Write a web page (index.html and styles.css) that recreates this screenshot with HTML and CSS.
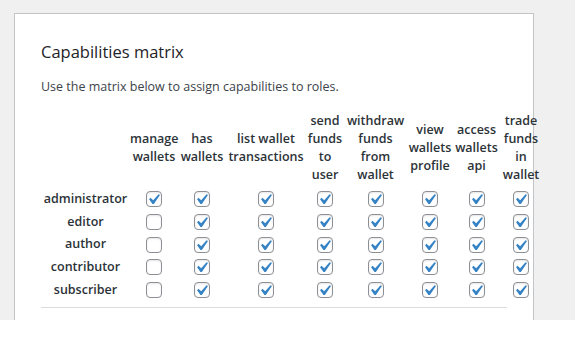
FILE: index.html
```html
<!DOCTYPE html>
<html>

<head>
  <meta charset="UTF-8">
  <title>Capabilities matrix</title>
  <link rel="stylesheet" href="styles.css">
</head>

<body>
<div class="wrap">
  <div class="card">
    <h2 class="title">Capabilities matrix</h2>
    <p class="desc">Use the matrix below to assign capabilities to roles.</p>

    <table class="matrix">
      <colgroup>
        <col class="c-role">
        <col class="c-manage">
        <col class="c-has">
        <col class="c-list">
        <col class="c-send">
        <col class="c-withdraw">
        <col class="c-view">
        <col class="c-access">
        <col class="c-trade">
      </colgroup>
      <thead>
        <tr>
          <th></th>
          <th>manage<br>wallets</th>
          <th>has<br>wallets</th>
          <th>list wallet<br>transactions</th>
          <th>send<br>funds<br>to<br>user</th>
          <th>withdraw<br>funds<br>from<br>wallet</th>
          <th>view<br>wallets<br>profile</th>
          <th>access<br>wallets<br>api</th>
          <th>trade<br>funds<br>in<br>wallet</th>
        </tr>
      </thead>
      <tbody id="rows"></tbody>
    </table>
    <hr class="sep">
  </div>
</div>

<script type="text/javascript">
  // roles and whether they can "manage wallets" (all other caps are on)
  var roles = [
    ['administrator', true],
    ['editor', false],
    ['author', false],
    ['contributor', false],
    ['subscriber', false]
  ]
  var check = '<svg viewBox="0 0 20 20" width="21" height="21"><path d="M14.83 4.89l1.34.94-5.81 8.38H9.02L5.78 9.67l1.34-1.25 2.57 2.4z" fill="#3582c4"/></svg>'

  function box(on) {
    return '<td><span class="box' + (on ? ' on' : '') + '">' + (on ? check : '') + '</span></td>'
  }

  var html = ''
  roles.forEach(function (role) {
    html += '<tr><th class="role">' + role[0] + '</th>' + box(role[1])
    for (var i = 0; i < 7; i++) {
      html += box(true)
    }
    html += '</tr>'
  })
  document.getElementById('rows').innerHTML = html
</script>
</body>

</html>
```

FILE: styles.css
```css
html, body {
  margin: 0;
  padding: 0;
  background: #fff;
}

body {
  font-family: "Open Sans", "Noto Sans", sans-serif;
  font-size: 12.5px;
  color: #3c434a;
}

.wrap {
  height: 320px;
  overflow: hidden;
  background: #f0f0f1;
  padding: 13px 0 0 14px;
  box-sizing: border-box;
}

.card {
  width: 520px;
  height: 400px;
  box-sizing: border-box;
  padding: 0 26px;
  background: #fff;
  border: 1px solid #c3c4c7;
}

.title {
  margin: 0;
  padding-top: 26px;
  font-size: 16.5px;
  line-height: 24px;
  font-weight: 400;
  color: #1d2327;
}

.desc {
  margin: 13px 0 0;
  line-height: 20px;
}

.matrix {
  margin-top: 10px;
  border-collapse: collapse;
  table-layout: fixed;
  width: 501px;
}

.c-role { width: 89px; }
.c-manage { width: 48px; }
.c-has { width: 48px; }
.c-list { width: 80px; }
.c-send { width: 38px; }
.c-withdraw { width: 63px; }
.c-view { width: 46px; }
.c-access { width: 47px; }
.c-trade { width: 42px; }

.matrix th,
.matrix td {
  padding: 0;
  text-align: center;
  vertical-align: middle;
}

.matrix thead th {
  padding: 5px 0 3px;
  font-weight: 600;
  line-height: 18px;
  color: #2c3338;
  white-space: nowrap;
}

.matrix tbody tr {
  height: 22.75px;
}

.role {
  font-weight: 600;
  color: #2c3338;
  white-space: nowrap;
}

.box {
  position: relative;
  display: inline-block;
  vertical-align: middle;
  width: 16px;
  height: 16px;
  box-sizing: border-box;
  border: 1px solid #8c8f94;
  border-radius: 4px;
  background: #fff;
  box-shadow: inset 0 1px 2px rgba(0, 0, 0, .1);
}

.box svg {
  position: absolute;
  left: -4px;
  top: -3px;
}

.sep {
  margin: 6px 0 0;
  border: 0;
  border-top: 1px solid #dcdcde;
}
```
